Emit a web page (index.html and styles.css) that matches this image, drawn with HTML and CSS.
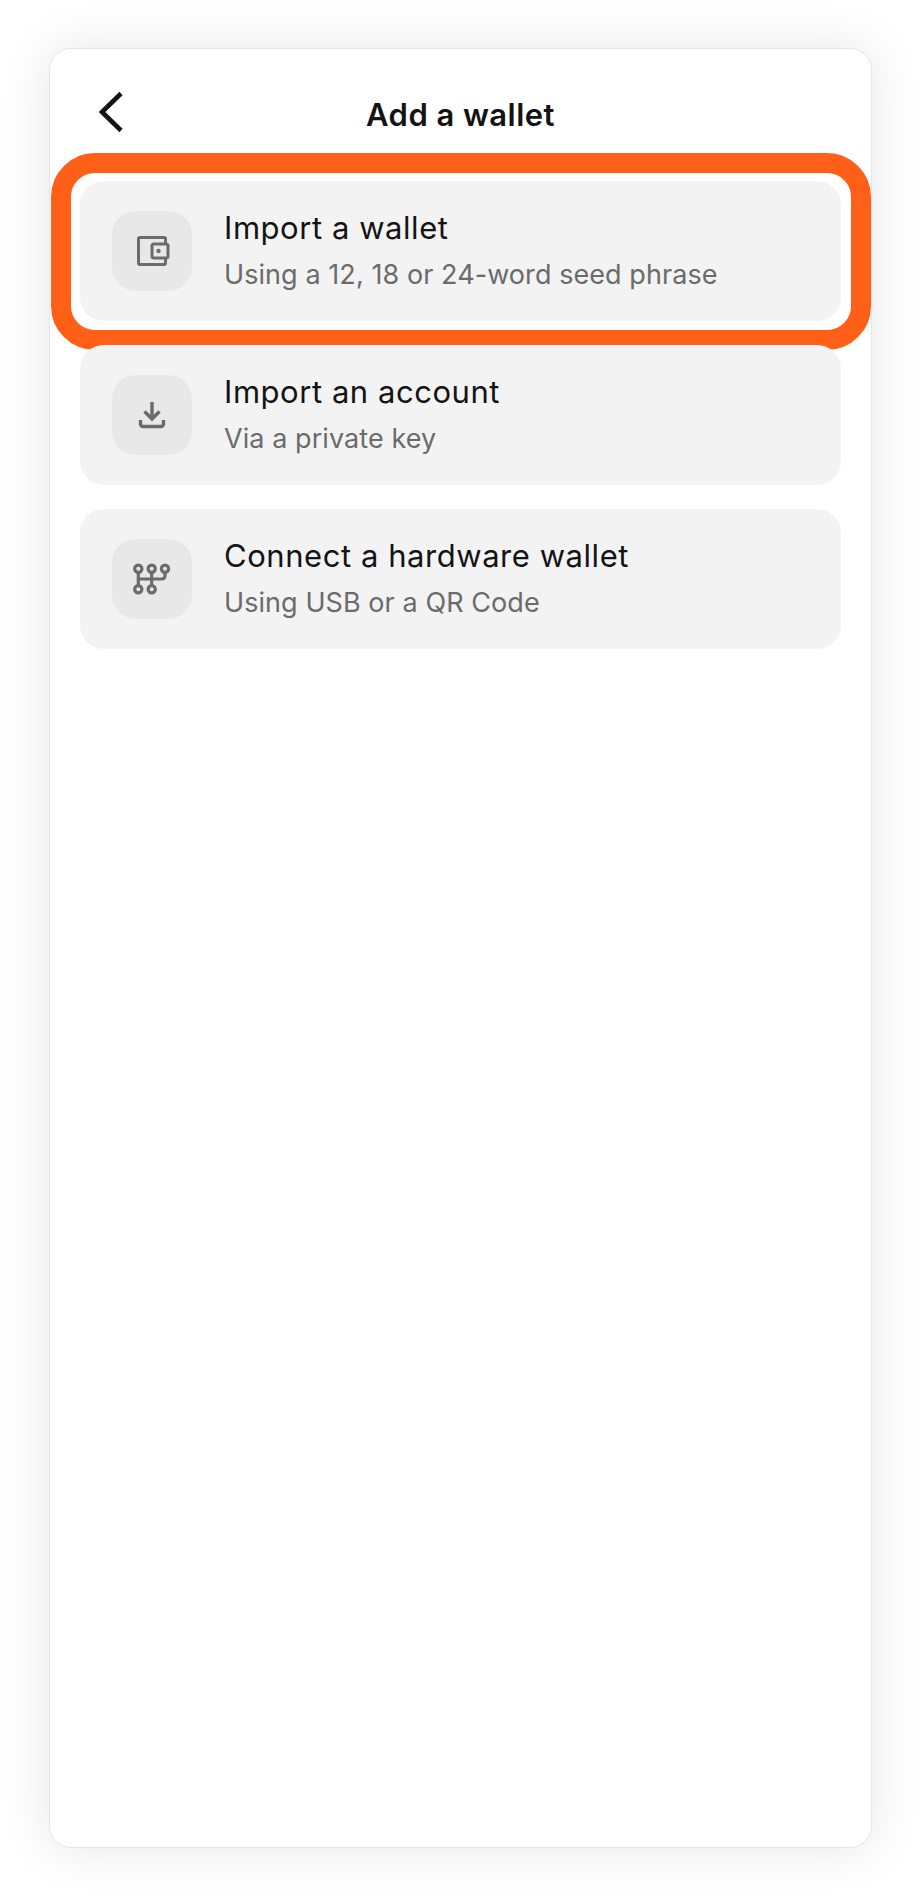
FILE: index.html
```html
<!DOCTYPE html>
<html lang="en">
<head>
    <meta charset="UTF-8">
    <meta name="viewport" content="width=device-width, initial-scale=1.0">
    <title>Add a wallet</title>
    <link rel="stylesheet" href="styles.css">
</head>
<body>
    <div class="card">
        <header class="header">
            <svg class="back" width="30" height="44" viewBox="0 0 30 44" fill="none" stroke="#141414" stroke-width="4.6">
                <path d="M25 3.5 6 22l19 18.500"/>
            </svg>
            <h1>Add a wallet</h1>
        </header>
        <div class="list">
            <div class="row highlighted">
                <div class="icon">
                    <svg width="40" height="40" viewBox="0 0 40 40" fill="none" stroke="#6b6b6b" stroke-width="3" stroke-linejoin="round">
                        <path d="M33.500 13V8a1.500 1.500 0 0 0-1.500-1.500H8A1.500 1.500 0 0 0 6.500 8v24A1.500 1.500 0 0 0 8 33.500h24a1.500 1.500 0 0 0 1.500-1.500v-5"/>
                        <rect x="20" y="13" width="16" height="14" rx="2"/>
                        <circle cx="26.500" cy="20" r="2.200" fill="#6b6b6b" stroke="none"/>
                    </svg>
                </div>
                <div class="text">
                    <div class="name">Import a wallet</div>
                    <div class="desc">Using a 12, 18 or 24-word seed phrase</div>
                </div>
            </div>
            <div class="row">
                <div class="icon">
                    <svg width="40" height="40" viewBox="0 0 40 40" fill="none" stroke="#6b6b6b" stroke-width="3.400">
                        <path d="M20 7v17M12.500 16.500 20 24l7.500-7.500"/>
                        <path d="M8.500 25v4a2.500 2.500 0 0 0 2.500 2.500h18a2.500 2.500 0 0 0 2.500-2.500v-4"/>
                    </svg>
                </div>
                <div class="text">
                    <div class="name">Import an account</div>
                    <div class="desc">Via a private key</div>
                </div>
            </div>
            <div class="row">
                <div class="icon">
                    <svg width="40" height="40" viewBox="0 0 40 40" fill="none" stroke="#6b6b6b" stroke-width="3.200">
                        <circle cx="6.300" cy="9.700" r="3.600"/>
                        <circle cx="19.700" cy="9.700" r="3.600"/>
                        <circle cx="33" cy="9.700" r="3.600"/>
                        <circle cx="6.300" cy="30.300" r="3.600"/>
                        <circle cx="19.700" cy="30.300" r="3.600"/>
                        <path d="M6.300 13v14M19.700 13v14M6.300 20H30a3 3 0 0 0 3-3v-4"/>
                    </svg>
                </div>
                <div class="text">
                    <div class="name">Connect a hardware wallet</div>
                    <div class="desc">Using USB or a QR Code</div>
                </div>
            </div>
        </div>
    </div>
</body>
</html>
```

FILE: styles.css
```css
* {
    box-sizing: border-box;
}
body {
    margin: 0;
    height: 1896px;
    padding: 48px 48px 48px 49px;
    background-color: #fff;
    font-family: Inter, "Liberation Sans", sans-serif;
}
.card {
    height: 1800px;
    padding: 0 30px;
    background-color: #fff;
    border: 1px solid #e6e6e6;
    border-radius: 22px;
    box-shadow: 0 0 52px rgba(0, 0, 0, 0.1);
}
.header {
    display: flex;
    align-items: center;
    justify-content: center;
    position: relative;
    height: 132px;
    padding-bottom: 2px;
}
.header h1 {
    margin: 0;
    font-size: 31px;
    font-weight: 600;
    letter-spacing: 0.45px;
    color: #141414;
}
.back {
    position: absolute;
    left: 16px;
    top: 41px;
}
.list {
    display: flex;
    flex-direction: column;
    gap: 24px;
}
.row {
    display: flex;
    align-items: center;
    gap: 32px;
    height: 140px;
    padding: 0 32px;
    background-color: #f3f3f3;
    border-radius: 24px;
    position: relative;
}
.highlighted::after {
    content: "";
    position: absolute;
    top: -28px;
    right: -30px;
    bottom: -29px;
    left: -29px;
    border: 20px solid #ff5f17;
    border-radius: 44px;
}
.icon {
    display: flex;
    align-items: center;
    justify-content: center;
    flex: none;
    width: 80px;
    height: 80px;
    background-color: #e8e8e8;
    border-radius: 24px;
}
.icon svg {
    display: block;
}
.name {
    font-size: 31px;
    font-weight: 400;
    letter-spacing: 0.55px;
    line-height: 40px;
    color: #141414;
}
.desc {
    margin-top: 8px;
    font-size: 27px;
    letter-spacing: 0.07px;
    line-height: 38px;
    color: #6b6b6b;
}
```
